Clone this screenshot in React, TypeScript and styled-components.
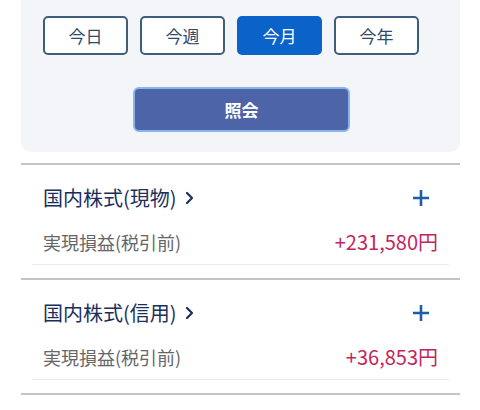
import React, { useState } from "react";
import styled, { createGlobalStyle } from "styled-components";

const GlobalStyle = createGlobalStyle`
  body {
    margin: 0;
    background: #ffffff;
    font-family: "Noto Sans CJK JP", "Noto Sans", sans-serif;
  }
`;

const Page = styled.div`
  width: 480px;
  display: flex;
  flex-direction: column;
`;

const Panel = styled.div`
  margin: 0 20px 0 21px;
  background: #f3f5f8;
  border-radius: 0 0 10px 10px;
  padding: 16px 0 20px;
  display: flex;
  flex-direction: column;
  align-items: center;
  gap: 32px;
`;

const PeriodRow = styled.div`
  display: flex;
  gap: 12px;
  align-self: flex-start;
  margin-left: 22px;
`;

const PeriodButton = styled.button<{ $active?: boolean }>`
  width: 85px;
  height: 39px;
  box-sizing: border-box;
  border-radius: 5px;
  border: 2px solid ${(p) => (p.$active ? "#0b62c9" : "#3f5e7b")};
  background: ${(p) => (p.$active ? "#0b62c9" : "#ffffff")};
  color: ${(p) => (p.$active ? "#ffffff" : "#2d4a68")};
  font-family: inherit;
  font-size: 17px;
  padding: 0;
  cursor: pointer;
`;

const SearchButton = styled.button`
  width: 217px;
  height: 45px;
  box-sizing: border-box;
  border-radius: 6px;
  border: 2px solid #8db4ea;
  background: #4d64a8;
  color: #ffffff;
  font-family: inherit;
  font-size: 17px;
  font-weight: 700;
  margin-left: 2px;
  cursor: pointer;
`;

const List = styled.div`
  margin: 11px 20px 0 21px;
`;

const Section = styled.div`
  border-top: 2px solid #c4c4c4;
`;

const SectionBody = styled.div`
  padding: 19px 11px 0;
  margin-bottom: 13px;
`;

const TitleRow = styled.div`
  display: flex;
  align-items: center;
  justify-content: space-between;
  height: 28px;
  padding: 0 19px 0 11px;
`;

const Title = styled.div`
  font-size: 20px;
  line-height: 28px;
  color: #1b2f5c;
  display: flex;
  align-items: center;
  gap: 8px;
`;

const DataRow = styled.div`
  display: flex;
  align-items: center;
  justify-content: space-between;
  margin-top: 16px;
  padding: 0 11px 8px;
  border-bottom: 1px solid #ebebeb;
`;

const Label = styled.span`
  font-size: 18px;
  line-height: 28px;
  color: #666666;
`;

const Amount = styled.span`
  font-size: 20px;
  line-height: 28px;
  color: #c1275d;
`;

const Chevron = () => (
  <svg width="9" height="14" viewBox="0 0 9 14">
    <path d="M2 2l5 5-5 5" fill="none" stroke="#1b2f5c" strokeWidth="2.2" strokeLinecap="round" strokeLinejoin="round" />
  </svg>
);

const PlusIcon = () => (
  <svg width="18" height="18" viewBox="0 0 18 18">
    <path d="M9 1v16M1 9h16" stroke="#1e5ea8" strokeWidth="2.6" />
  </svg>
);

const results = [
  { title: "国内株式(現物)", amount: "+231,580円" },
  { title: "国内株式(信用)", amount: "+36,853円" },
];

const periods = ["今日", "今週", "今月", "今年"];

export default function App() {
  const [period, setPeriod] = useState("今月");
  return (
    <Page>
      <GlobalStyle />
      <Panel>
        <PeriodRow>
          {periods.map((p) => (
            <PeriodButton key={p} $active={p === period} onClick={() => setPeriod(p)}>
              {p}
            </PeriodButton>
          ))}
        </PeriodRow>
        <SearchButton>照会</SearchButton>
      </Panel>
      <List>
        {results.map((r) => (
          <Section key={r.title}>
            <SectionBody>
              <TitleRow>
                <Title>
                  {r.title}
                  <Chevron />
                </Title>
                <PlusIcon />
              </TitleRow>
              <DataRow>
                <Label>実現損益(税引前)</Label>
                <Amount>{r.amount}</Amount>
              </DataRow>
            </SectionBody>
          </Section>
        ))}
        <Section />
      </List>
    </Page>
  );
}
